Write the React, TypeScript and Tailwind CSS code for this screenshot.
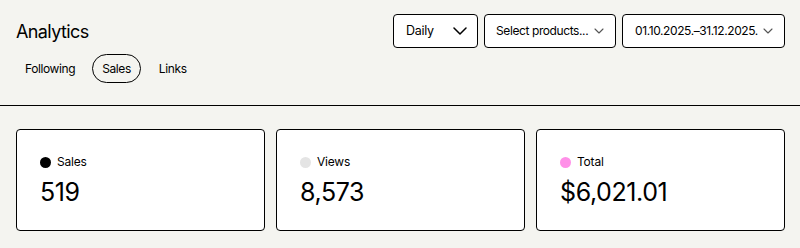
import React from "react";

function Chevron({ big }: { big?: boolean }) {
  if (big) {
    return (
      <svg width="14" height="8" viewBox="0 0 14 8" fill="none">
        <path d="M1 1l6 6 6-6" stroke="#000" strokeWidth="1.5" strokeLinecap="round" strokeLinejoin="round" />
      </svg>
    );
  }
  return (
    <svg width="10" height="6" viewBox="0 0 10 6" fill="none">
      <path d="M1 1l4 4 4-4" stroke="#555" strokeWidth="1.1" strokeLinecap="round" strokeLinejoin="round" />
    </svg>
  );
}

function Card({ dot, label, value }: { dot: string; label: string; value: string }) {
  return (
    <div className="bg-white border border-black rounded-[4px] h-[102px] pl-[23px] pt-[22px] flex flex-col">
      <div className="flex items-center gap-[6px] h-[20px]">
        <span className={`w-[11px] h-[11px] rounded-full ${dot}`} />
        <span className="text-[12px] tracking-[-0.2px] text-black">{label}</span>
      </div>
      <div className="mt-[4px] text-[25px] tracking-[-0.4px] leading-[32px] text-black">{value}</div>
    </div>
  );
}

export default function App() {
  return (
    <div className="w-[800px] h-[248px] bg-[#f4f4f0] overflow-hidden" style={{ fontFamily: "Inter, 'Noto Sans', sans-serif" }}>
      <div className="border-b border-black pl-4 pr-[15px] pt-[14px] pb-[22px]">
        <div className="flex items-center justify-between h-[34px]">
          <h1 className="text-[18px] tracking-[-0.6px] text-black">Analytics</h1>
          <div className="flex gap-[6px] h-[34px] whitespace-nowrap">
            <button className="w-[85px] bg-white border border-black rounded-[4px] flex items-center justify-between pl-[12px] pr-[10px] text-[12.5px] tracking-[-0.3px]">
              <span>Daily</span>
              <Chevron big />
            </button>
            <button className="w-[132px] bg-white border border-black rounded-[4px] flex items-center justify-between pl-[11px] pr-[11px] text-[12px] tracking-[-0.4px]">
              <span>Select products...</span>
              <Chevron />
            </button>
            <button className="w-[163px] bg-white border border-black rounded-[4px] flex items-center justify-between pl-[12px] pr-[11px] text-[12px] tracking-[-0.4px]">
              <span>01.10.2025.–31.12.2025.</span>
              <Chevron />
            </button>
          </div>
        </div>
        <div className="flex items-center mt-[6px] h-[29px] text-[12px] tracking-[-0.4px] text-black">
          <span className="ml-[9px]">Following</span>
          <span className="ml-[17px] h-[29px] px-[9px] border border-black rounded-full flex items-center">Sales</span>
          <span className="ml-[18px]">Links</span>
        </div>
      </div>
      <div className="pl-4 pr-[15px] pt-[23px] grid grid-cols-3 gap-[11px]">
        <Card dot="bg-black" label="Sales" value="519" />
        <Card dot="bg-[#e4e4e4]" label="Views" value="8,573" />
        <Card dot="bg-[#ff90e8]" label="Total" value="$6,021.01" />
      </div>
    </div>
  );
}
